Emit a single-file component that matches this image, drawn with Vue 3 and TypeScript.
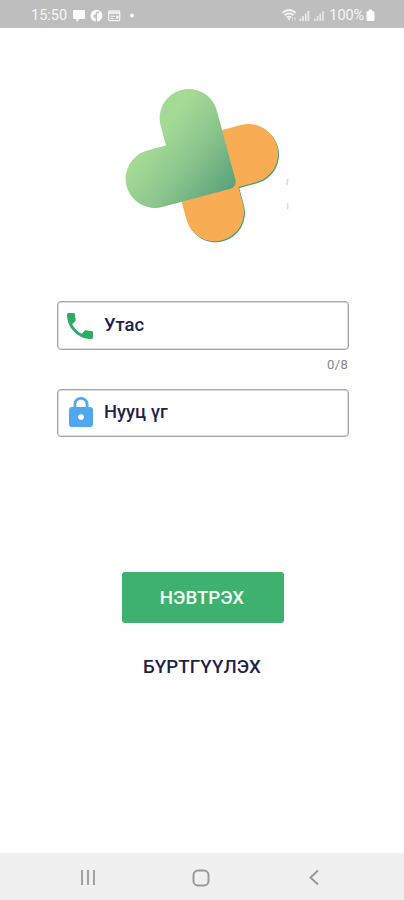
<script setup lang="ts">
import { ref } from 'vue'

const phone = ref<string>('')
const maxDigits = 8
</script>

<template>
  <div class="screen">
    <header class="status">
      <span class="time">15:50</span>
      <svg class="notices" width="66" height="16" viewBox="0 0 66 16" fill="#fbfbfb">
        <path d="M2 2h10q1 0 1 1v7q0 1-1 1H7.500l-3 3v-3H2q-1 0-1-1V3q0-1 1-1z" />
        <circle cx="24.500" cy="7.700" r="6" />
        <path d="M24.300 14V9h-2V7.400h2V6.200q0-2.200 2.700-1.900" fill="none" stroke="#bebebe" stroke-width="1.400" />
        <rect x="36.700" y="3" width="11" height="9.600" rx="1" fill="none" stroke="#f4f4f4" stroke-width="1.300" />
        <path d="M37 4.300h11v1.500H37zM39 7.800h4v1h-4zM39 10h3v1h-3zM44 7.800h2.500v3H44z" />
        <circle cx="60" cy="7.500" r="1.900" />
      </svg>
      <div class="spacer"></div>
      <svg class="signals" width="46" height="16" viewBox="0 0 46 16" fill="#f6f6f6">
        <path d="M.3 4.800Q7 -.8 13.700 4.800M2.500 7.200q4.500-3.700 9 0M4.800 9.500q2.200-1.700 4.400 0" fill="none" stroke="#f6f6f6" stroke-width="1.700" />
        <path d="M7 12.700 5.500 10.200h3z" />
        <path d="M10.500 12.500V9M13 12.500V9" stroke="#e0e0e0" stroke-width="1" />
        <path d="M17.500 10.500h1.700V13h-1.700zM20.200 8h1.700v5h-1.700zM22.900 5.500h1.700V13h-1.700zM25.600 3h1.700v10h-1.700z" opacity=".82" />
        <path d="M32 10.500h1.700V13H32zM34.700 8h1.700v5h-1.700zM37.400 5.500h1.700V13h-1.700zM40.100 3h1.700v10h-1.700z" opacity=".7" />
      </svg>
      <span class="percent">100%</span>
      <svg class="battery" width="9" height="13" viewBox="0 0 9 13"><path d="M3 .5h3V2h1q1.500 0 1.500 1.500v7Q8.500 12 7 12H2Q.5 12 .5 10.500v-7Q.5 2 2 2h1z" fill="#fff" /></svg>
    </header>

    <main class="content">
      <svg class="logo" width="180" height="160" viewBox="115 85 180 160">
        <defs>
          <linearGradient id="leaf" gradientUnits="userSpaceOnUse" x1="-57" y1="-76" x2="-4" y2="-4">
            <stop offset="0" stop-color="#a5da95" />
            <stop offset=".45" stop-color="#8bc68c" />
            <stop offset="1" stop-color="#5ba47c" />
          </linearGradient>
        </defs>
        <g transform="translate(238.700 188.200) rotate(-15)" fill="#3b9f70">
          <path d="M-58-20V18A29.300 29.300 0 0 0 .6 18V0H19A29.600 29.600 0 0 0 19-59.200H-20z" />
        </g>
        <g transform="translate(237.800 187.200) rotate(-15)">
          <path d="M-58-20V18A29.300 29.300 0 0 0 .6 18V0H19A29.600 29.600 0 0 0 19-59.200H-20z" fill="#f8ac54" />
          <path d="M-.4-79.500A29.100 29.100 0 0 0-58.600-79.500V-58.800H-78A29.200 29.200 0 0 0-78-.4H-8.400Q-.4-.4-.4-8.400z" fill="url(#leaf)" />
        </g>
        <path d="M287.800 179l-.8 6M287.700 203v6" stroke="#d9d9df" stroke-width="1.500" />
      </svg>

      <form class="form" @submit.prevent>
        <label class="field phone">
          <svg width="26" height="26" viewBox="3 3 18 18" fill="#2bad69"><path d="M6.620 10.790c1.440 2.830 3.760 5.140 6.590 6.590l2.200-2.200c.27-.27.67-.36 1.020-.24 1.120.37 2.330.57 3.570.57.550 0 1 .45 1 1V20c0 .55-.45 1-1 1-9.390 0-17-7.610-17-17 0-.55.45-1 1-1h3.500c.55 0 1 .45 1 1 0 1.250.2 2.450.57 3.570.11.350.03.740-.25 1.020z" /></svg>
          <span>Утас</span>
        </label>
        <div class="counter">{{ phone.length }}/{{ maxDigits }}</div>
        <label class="field password">
          <svg width="24" height="30" viewBox="4 1 16 21" preserveAspectRatio="none" fill="#4fa8ef"><path d="M18 8h-1V6c0-2.760-2.240-5-5-5S7 3.240 7 6v2H6c-1.100 0-2 .9-2 2v10c0 1.100.9 2 2 2h12c1.100 0 2-.9 2-2V10c0-1.100-.9-2-2-2zm-6 9c-1.100 0-2-.9-2-2s.9-2 2-2 2 .9 2 2-.9 2-2 2zm3.100-9H8.900V6c0-1.710 1.390-3.100 3.100-3.100s3.100 1.390 3.100 3.100v2z" /></svg>
          <span>Нууц үг</span>
        </label>
        <button class="login" type="submit">НЭВТРЭХ</button>
        <button class="register" type="button">БҮРТГҮҮЛЭХ</button>
      </form>
    </main>

    <nav class="navbar">
      <svg width="17" height="17" viewBox="0 0 17 17"><path d="M2 1v15M8 1v15M14 1v15" stroke="#a0a0a0" stroke-width="2" /></svg>
      <svg width="18" height="18" viewBox="0 0 18 18"><rect x="1.500" y="1.500" width="15" height="15" rx="4.500" fill="none" stroke="#969696" stroke-width="1.900" /></svg>
      <svg width="17" height="17" viewBox="0 0 17 17"><path d="M13 1.500 5.500 8.500l7.500 7" fill="none" stroke="#969696" stroke-width="1.900" /></svg>
    </nav>
  </div>
</template>

<style>
body {
  background: #fff;
}
</style>

<style scoped>
.screen {
  display: flex;
  flex-direction: column;
  width: 404px;
  height: 900px;
  background: #fff;
  font-family: Roboto, sans-serif;
  overflow: hidden;
}
.status {
  display: flex;
  align-items: center;
  box-sizing: border-box;
  height: 28px;
  padding: 4px 29px 0 31px;
  background: #bebebe;
  color: #f7f7f7;
  font-size: 14.500px;
  line-height: 24px;
}
.notices {
  margin-left: 5px;
}
.spacer {
  flex: 1;
}
.signals {
  margin-right: 1px;
}
.percent {
  letter-spacing: -0.1px;
}
.battery {
  margin: 0 0 2px 2px;
}
.content {
  flex: 1;
  display: flex;
  flex-direction: column;
}
.logo {
  display: block;
  margin: 57px 0 0 115px;
}
.form {
  display: flex;
  flex-direction: column;
  width: 292px;
  margin: 56px 0 0 57px;
}
.field {
  display: flex;
  align-items: center;
  box-sizing: border-box;
  border: 1px solid #a6a6a6;
  box-shadow: inset 0 0 0 1px #dcdcdc;
  border-radius: 4px;
  color: #1e1f4b;
  font-size: 18.400px;
  font-weight: 500;
}
.phone {
  height: 49px;
  padding: 0 0 2px 9px;
}
.phone svg {
  margin: 2px 11px 0 0;
}
.password {
  height: 48px;
  margin-top: 9px;
  padding: 0 0 3px 11px;
}
.password svg {
  margin-right: 11px;
}
.counter {
  height: 30px;
  padding-right: 1px;
  box-sizing: border-box;
  text-align: right;
  font-size: 13px;
  letter-spacing: 0.3px;
  line-height: 29px;
  color: #858585;
}
.login,
.register {
  border: 0;
  padding: 0;
  font-family: inherit;
  font-size: 18.700px;
  font-weight: 500;
}
.login {
  width: 162px;
  height: 51px;
  margin: 135px 0 0 65px;
  padding: 1px 2px 0 0;
  border-radius: 3px;
  background: #3fb16e;
  color: #f4fff5;
}
.register {
  align-self: center;
  margin: 33px 2px 0 0;
  background: none;
  color: #1e1f4b;
  line-height: 22px;
  letter-spacing: 0.1px;
}
.navbar {
  display: flex;
  align-items: center;
  justify-content: space-between;
  box-sizing: border-box;
  height: 47px;
  padding: 2px 82px 0 80px;
  background: #f0f0f0;
}
</style>
